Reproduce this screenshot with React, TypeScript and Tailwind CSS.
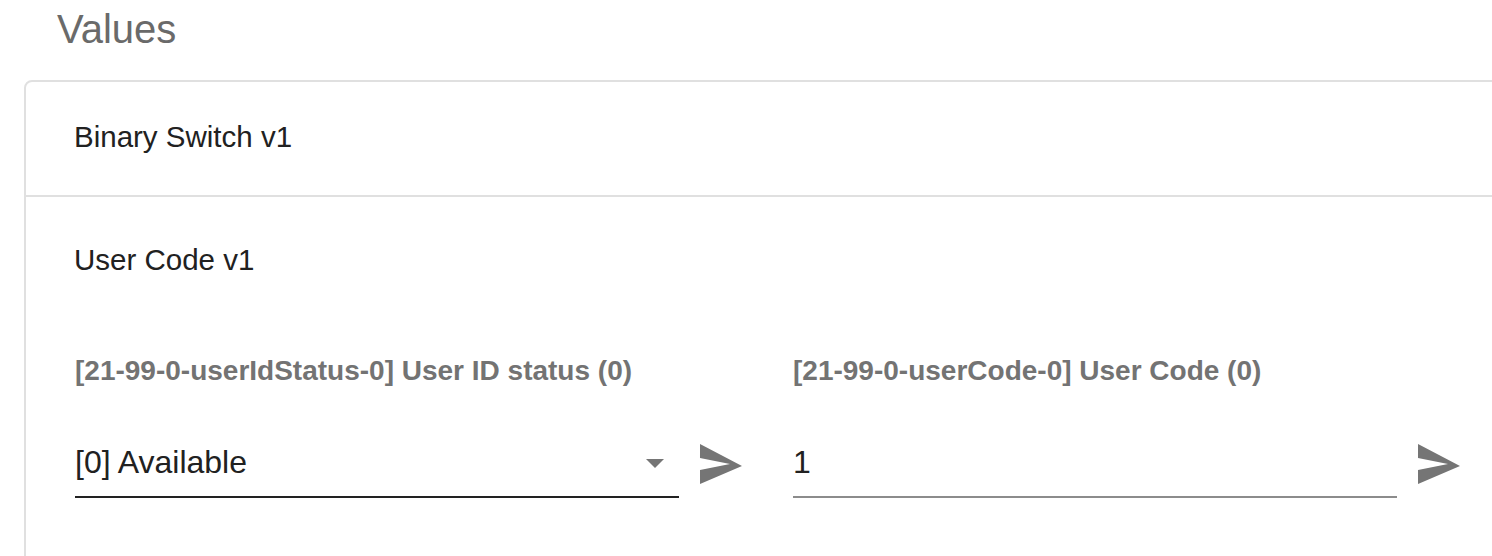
import React from "react";

function SendIcon() {
  return (
    <svg width="48" height="48" viewBox="0 0 24 24" className="shrink-0 -mt-[4px] ml-[17px]">
      <path d="M2.01 21L2 14l15-3-15-3 .01-7L23 12 2.01 21z" fill="#757575" />
    </svg>
  );
}

function Field({ label, value, select }: { label: string; value: string; select?: boolean }) {
  return (
    <div className="flex flex-col">
      <div className="text-[28px] leading-none font-bold text-[#737373] whitespace-nowrap">{label}</div>
      <div className="flex items-start mt-[61px]">
        <div
          className={
            "flex-1 flex items-center justify-between pb-[18px] border-b-2 " +
            (select ? "border-[#222222]" : "border-[#8c8c8c]")
          }
        >
          <span className="text-[32px] leading-none text-[#212121]">{value}</span>
          {select && (
            <svg width="20" height="10" viewBox="0 0 20 10" className="mr-[14px] mt-[4px]">
              <path d="M1 0 L19 0 L10 9 Z" fill="#757575" />
            </svg>
          )}
        </div>
        <SendIcon />
      </div>
    </div>
  );
}

export default function App() {
  return (
    <div
      className="w-[1492px] h-[556px] overflow-hidden bg-white"
      style={{ fontFamily: '"Liberation Sans", Arial, Helvetica, sans-serif' }}
    >
      <div className="pl-[57px] pt-[9px] text-[40px] leading-none text-[#6a6a6a]">Values</div>
      <div className="ml-[24px] mt-[31px] w-[1490px] border-2 border-[#e0e0e0] rounded-[8px] h-[600px]">
        <div className="pl-[48px] pt-[40px] pb-[43px] border-b-2 border-[#e0e0e0] text-[29.5px] leading-none text-[#212121]">
          Binary Switch v1
        </div>
        <div className="pt-[48px]">
          <div className="pl-[48px] text-[29.5px] leading-none text-[#212121]">User Code v1</div>
          <div className="pl-[49px] grid grid-cols-[669px_669px] gap-x-[49px] mt-[83px]">
            <Field label="[21-99-0-userIdStatus-0] User ID status (0)" value="[0] Available" select />
            <Field label="[21-99-0-userCode-0] User Code (0)" value="1" />
          </div>
        </div>
      </div>
    </div>
  );
}
